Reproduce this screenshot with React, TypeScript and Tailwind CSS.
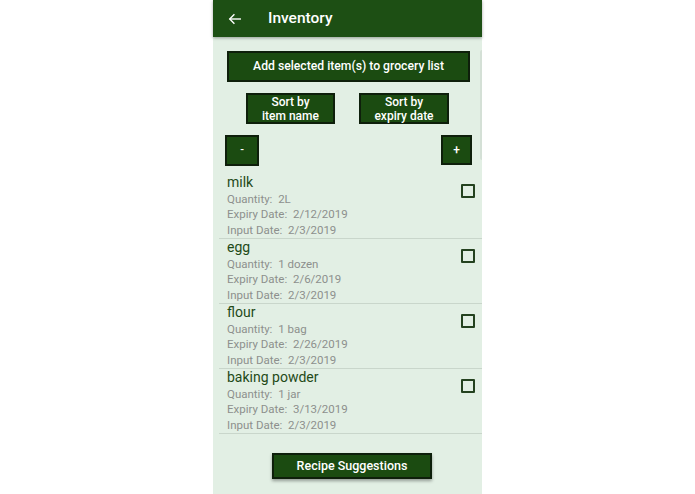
import React from 'react';

interface Item {
  name: string;
  quantity: string;
  expiry: string;
  input: string;
}

const items: Item[] = [
  { name: 'milk', quantity: '2L', expiry: '2/12/2019', input: '2/3/2019' },
  { name: 'egg', quantity: '1 dozen', expiry: '2/6/2019', input: '2/3/2019' },
  { name: 'flour', quantity: '1 bag', expiry: '2/26/2019', input: '2/3/2019' },
  { name: 'baking powder', quantity: '1 jar', expiry: '3/13/2019', input: '2/3/2019' },
];

const btn = 'bg-[#1b4b11] border-2 border-[#0e1f0b] text-white font-medium flex items-center justify-center text-center';

const InventoryRow: React.FC<{ item: Item }> = ({ item }) => (
  <div className="relative pl-[8px] border-b border-[#c9d6cb]">
    <div className="text-[14px] leading-[17.5px] text-[#1f4a18]">{item.name}</div>
    <div className="text-[11.5px] leading-[15.5px] text-[#8d8f8d]">
      <div>Quantity:&nbsp;&nbsp;{item.quantity}</div>
      <div>Expiry Date:&nbsp;&nbsp;{item.expiry}</div>
      <div>Input Date:&nbsp;&nbsp;{item.input}</div>
    </div>
    <div className="absolute left-[242px] top-[10px] w-[14px] h-[14px] border-2 border-[#24421f] rounded-[1px]" />
  </div>
);

export default function App() {
  return (
    <div className="w-full h-[494px] bg-white flex justify-center" style={{ fontFamily: 'Roboto, "Noto Sans", sans-serif' }}>
      <div className="w-[269px] h-full bg-[#e2efe4] flex flex-col relative">
        {/* toolbar */}
        <div className="h-[37px] bg-[#1d4f14] flex items-center shadow-[0_1px_3px_rgba(0,0,0,0.35)] z-10">
          <svg width="14" height="14" viewBox="0 0 24 24" className="ml-[15px]" fill="none" stroke="white" strokeWidth="2.4" strokeLinecap="square">
            <path d="M21 12H4" />
            <path d="M11 4l-8 8 8 8" strokeLinecap="butt" />
          </svg>
          <span className="ml-[26px] text-white text-[15.5px] font-medium">Inventory</span>
        </div>

        {/* scroll indicator */}
        <div className="absolute right-0 top-[50px] w-[2px] h-[110px] bg-[#d4e0d6] rounded-l" />

        <div className={`${btn} mt-[14px] ml-[14px] w-[243px] h-[31px] text-[12.2px]`}>
          Add selected item(s) to grocery list
        </div>

        <div className="flex mt-[11px]">
          <div className={`${btn} ml-[33px] w-[89px] h-[31px] text-[12px] leading-[14px]`}>
            Sort by<br />item name
          </div>
          <div className={`${btn} ml-[24px] w-[90px] h-[31px] text-[12px] leading-[14px]`}>
            Sort by<br />expiry date
          </div>
        </div>

        <div className="flex justify-between mt-[11px]">
          <div className={`${btn} ml-[12px] w-[34px] h-[31px] text-[11px] font-bold`}>-</div>
          <div className={`${btn} mr-[10px] w-[31px] h-[30px] text-[12px] font-bold`}>+</div>
        </div>

        <div className="mt-[8px] ml-[6px] flex flex-col">
          {items.map((it) => (
            <InventoryRow key={it.name} item={it} />
          ))}
        </div>

        <div className={`${btn} mt-[19px] ml-[59px] w-[160px] h-[26px] text-[12.5px] shadow-[0_2px_3px_rgba(0,0,0,0.35)]`}>
          Recipe Suggestions
        </div>
      </div>
    </div>
  );
}
